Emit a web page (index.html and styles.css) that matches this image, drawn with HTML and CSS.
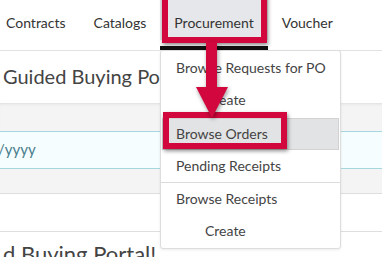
FILE: index.html
```html
<!DOCTYPE html>
<html lang="en">
<head>
    <meta charset="UTF-8">
    <meta name="viewport" content="width=device-width, initial-scale=1.0">
    <title>Guided Buying - Procurement</title>
    <link rel="stylesheet" href="styles.css">
</head>
<body>
    <div class="topnav">
        <a class="nav-item">Contracts</a>
        <a class="nav-item">Catalogs</a>
        <a class="nav-item active">Procurement</a>
        <a class="nav-item">Voucher</a>
    </div>

    <div class="page">
        <h2 class="title">Guided Buying Portal!</h2>
        <div class="band grey"></div>
        <div class="band date"><span>/yyyy</span></div>
        <div class="band grey bottom"></div>
        <div class="band blank"></div>
        <h2 class="title second">d Buying Portal!</h2>
    </div>

    <div class="menu">
        <div class="menu-item">Browse Requests for PO</div>
        <div class="menu-item sub">Create</div>
        <div class="menu-item selected">Browse Orders</div>
        <div class="menu-item">Pending Receipts</div>
        <div class="menu-item split">Browse Receipts</div>
        <div class="menu-item sub">Create</div>
    </div>

    <!-- callouts -->
    <div class="callout nav-callout"></div>
    <div class="callout item-callout"></div>
    <svg class="arrow" width="40" height="84" viewBox="0 0 40 84">
        <rect x="14" y="0" width="11" height="46" fill="#d2073d"/>
        <polygon points="4,45 36,45 20,76" fill="#d2073d"/>
    </svg>
</body>
</html>
```

FILE: styles.css
```css
body {
    margin: 0;
    font-family: Lato, "Open Sans", sans-serif;
    color: #444;
    background: white;
    overflow: hidden;
}
.topnav {
    display: flex;
    margin-left: -8px;
    border-bottom: 1px solid #e2e2e2;
}
.nav-item {
    display: flex;
    align-items: center;
    box-sizing: border-box;
    height: 50px;
    padding: 0 14px 2px;
    border-bottom: 4px solid transparent;
    font-size: 14px;
    color: #333;
}
.nav-item.active {
    border-bottom-color: #111;
    background: linear-gradient(#e6e7ea, #e6e7ea) no-repeat;
    background-size: 100% 40px;
}
.title {
    margin: 0;
    height: 52px;
    padding-left: 3px;
    line-height: 50px;
    font-size: 20px;
    font-weight: normal;
    color: #444;
    white-space: nowrap;
}
.band.grey {
    height: 28px;
    background: #f4f4f4;
    box-shadow: inset 0 3px 3px -2px #ddd;
}
.band.date {
    height: 36px;
    background: #f5fdfe;
    border-top: 1px solid #a6d7df;
    border-bottom: 1px solid #a6d7df;
    line-height: 34px;
    font-size: 15px;
    color: #4a7d8c;
}
.band.date span {
    margin-left: -2px;
}
.band.grey.bottom {
    height: 24px;
    box-shadow: none;
    border-bottom: 1px solid #dedede;
}
.band.blank {
    height: 37px;
    border-bottom: 1px solid #dedede;
}
.title.second {
    height: auto;
    line-height: 40px;
    margin-top: 2px;
    font-size: 22px;
}
.menu {
    position: absolute;
    left: 160px;
    top: 50px;
    width: 181px;
    height: 199px;
    box-sizing: border-box;
    padding-top: 1px;
    background: white;
    border: 1px solid #ddd;
    border-radius: 3px;
    box-shadow: 0 1px 3px rgba(0, 0, 0, 0.08);
}
.menu-item {
    height: 32px;
    line-height: 32px;
    padding-left: 15px;
    font-size: 14px;
    color: #444;
    white-space: nowrap;
}
.menu-item.sub {
    padding-left: 44px;
}
.menu-item.selected {
    margin: 2px 1px 0;
    padding-left: 14px;
    background: #e2e3e5;
    box-shadow: inset 0 0 0 1px #d2d2d2;
}
.menu-item.split {
    border-top: 1px solid #dcdcdc;
}
.callout {
    position: absolute;
    border: 6px solid #d2073d;
    box-shadow: 1px 2px 4px rgba(0, 0, 0, 0.45);
}
.nav-callout {
    left: 162px;
    top: -10px;
    width: 93px;
    height: 41px;
}
.item-callout {
    left: 163px;
    top: 112px;
    width: 112px;
    height: 25px;
}
.arrow {
    position: absolute;
    left: 192px;
    top: 42px;
    filter: drop-shadow(1px 2px 2px rgba(0, 0, 0, 0.4));
}
```
